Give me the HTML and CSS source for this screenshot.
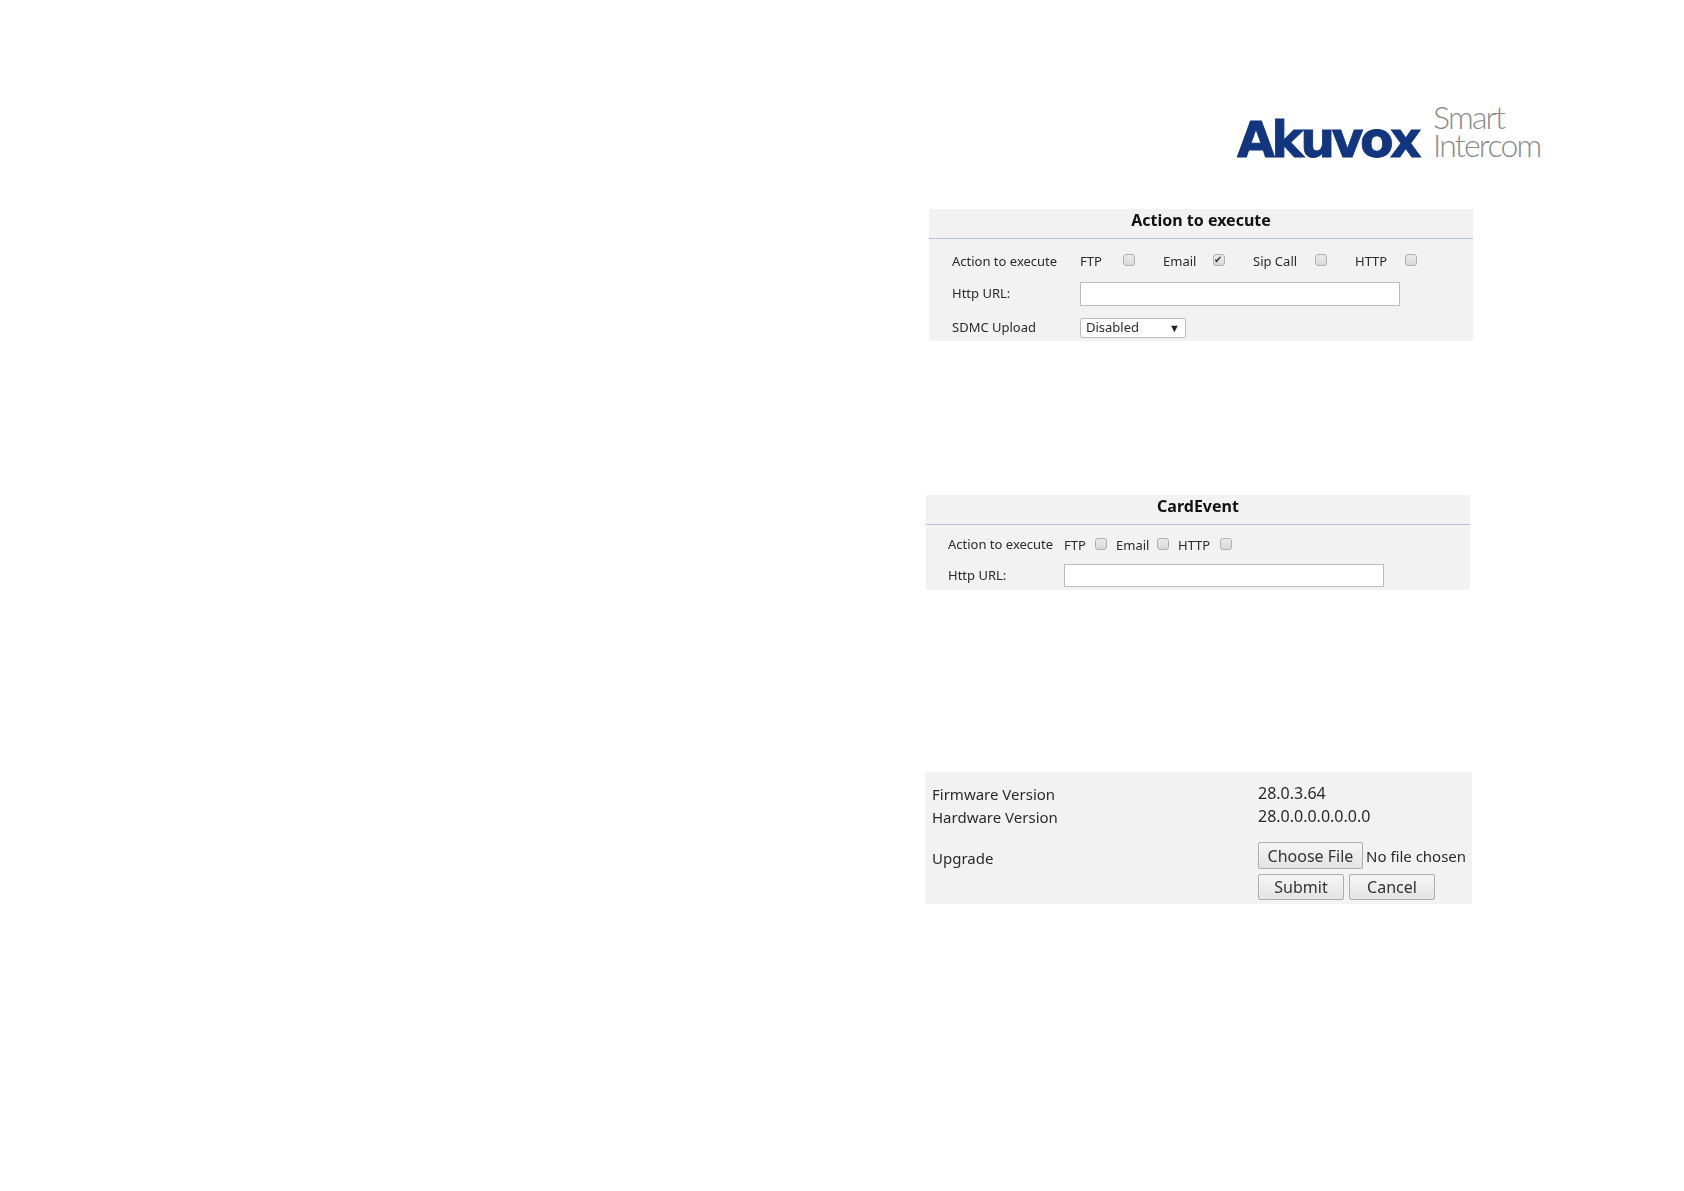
FILE: index.html
```html
<!DOCTYPE html>
<html lang="en">
<head>
<meta charset="utf-8">
<title>Akuvox Smart Intercom</title>
<link rel="stylesheet" href="styles.css">
</head>
<body>
<div class="page">
  <header class="logo">
    <div class="logo-brand">Akuvox</div>
    <div class="logo-tag">Smart<br>Intercom</div>
  </header>

  <section class="panel panel-action">
    <h2 class="panel-title">Action to execute</h2>
    <div class="panel-body">
      <div class="row row-check">
        <span class="label">Action to execute</span>
        <div class="checks">
          <label class="check">FTP<input type="checkbox"></label>
          <label class="check">Email<input type="checkbox" checked></label>
          <label class="check">Sip Call<input type="checkbox"></label>
          <label class="check">HTTP<input type="checkbox"></label>
        </div>
      </div>
      <div class="row">
        <span class="label">Http URL:</span>
        <input class="text-input" type="text">
      </div>
      <div class="row row-select">
        <span class="label">SDMC Upload</span>
        <div class="select"><span>Disabled</span><span class="arrow">▼</span></div>
      </div>
    </div>
  </section>

  <section class="panel panel-card">
    <h2 class="panel-title">CardEvent</h2>
    <div class="panel-body">
      <div class="row row-check">
        <span class="label">Action to execute</span>
        <div class="checks">
          <label class="check">FTP<input type="checkbox"></label>
          <label class="check">Email<input type="checkbox"></label>
          <label class="check">HTTP<input type="checkbox"></label>
        </div>
      </div>
      <div class="row">
        <span class="label">Http URL:</span>
        <input class="text-input" type="text">
      </div>
    </div>
  </section>

  <section class="panel panel-firmware">
    <div class="fw-row"><span class="fw-label">Firmware Version</span><span class="fw-value">28.0.3.64</span></div>
    <div class="fw-row"><span class="fw-label">Hardware Version</span><span class="fw-value">28.0.0.0.0.0.0.0</span></div>
    <div class="fw-upgrade">
      <span class="fw-label fw-upgrade-label">Upgrade</span>
      <div class="fw-actions">
        <div class="fw-line"><button class="btn btn-file" type="button">Choose File</button><span class="no-file">No file chosen</span></div>
        <div class="fw-line fw-buttons"><button class="btn btn-act" type="button">Submit</button><button class="btn btn-act" type="button">Cancel</button></div>
      </div>
    </div>
  </section>
</div>
</body>
</html>
```
FILE: styles.css
```css
* { box-sizing: border-box; }
html, body { margin: 0; padding: 0; background: #fff; }
body { font-family: "Noto Sans", "Open Sans", sans-serif; color: #222; }
.page { width: 1684px; height: 1191px; padding: 107px 0 0 925px; overflow: hidden; }

/* logo */
.logo { display: flex; align-items: flex-end; height: 52px; margin-left: 312px; gap: 12px; }
.logo-brand { width: 184px; font-family: "DejaVu Sans", sans-serif; font-weight: 700; font-size: 49px; line-height: 40px; height: 38px; color: #12357f; -webkit-text-stroke: 0.8px #12357f; letter-spacing: -3.6px; white-space: nowrap; }
.logo-tag { font-family: "Lato", sans-serif; font-weight: 300; font-size: 32px; line-height: 28px; color: #8a8a8a; letter-spacing: -1.8px; white-space: nowrap; }

/* panels */
.panel { width: 544px; background: #f2f2f2; filter: blur(0.35px); }
.panel-action { margin: 50px 0 0 4px; height: 132px; }
.panel-card { margin: 154px 0 0 1px; height: 95px; }
.panel-firmware { margin-top: 182px; width: 547px; height: 132px; padding: 10px 0 0 7px; }
.panel-title { margin: 0; height: 30px; border-bottom: 1px solid #b4c3dd; text-align: center; font-size: 16px; line-height: 22px; font-weight: 700; color: #111; }
.panel-body { display: flex; flex-direction: column; }
.panel-action .panel-body { padding: 11px 0 0 23px; gap: 12px; }
.panel-card .panel-body { padding: 10px 0 0 22px; gap: 9px; }

.row { display: flex; align-items: center; font-size: 13px; color: #2a2a2a; }
.row-check, .row-select { height: 20px; }
.label { margin-bottom: 2px; }
.panel-action .row-check .label { margin-bottom: 0; padding-top: 2px; }
.panel-action .label { width: 128px; }
.panel-card .label { width: 116px; }
.checks { display: grid; }
.panel-action .checks { grid-template-columns: 55px 62px 74px 62px; column-gap: 28px; }
.panel-card .checks { grid-template-columns: 43px 53px 54px; column-gap: 9px; }
.check { display: flex; align-items: center; justify-content: space-between; }
.panel-action .check { padding-top: 1px; }
.check input { appearance: none; margin: 0 0 3px; width: 12px; height: 12px; border: 1px solid #b0b0b0; border-radius: 3px; background: linear-gradient(#eaeaea, #d9d9d9); position: relative; }
.panel-action .check input { margin-bottom: 1px; }
.check input:checked::after { content: "✔"; position: absolute; left: 0; top: -2px; font-size: 10px; line-height: 14px; color: #333; }
.text-input { width: 320px; height: 24px; border: 1px solid #bcbcbc; background: #fff; margin: 0; padding: 0; }
.panel-card .text-input { height: 23px; }
.select { display: flex; align-items: center; justify-content: space-between; width: 106px; height: 20px; padding: 0 5px 2px 5px; background: #fff; border: 1px solid #bcbcbc; border-radius: 2px; }
.arrow { font-size: 11px; color: #222; }

/* firmware */
.fw-row { display: flex; height: 23px; align-items: center; font-size: 15px; color: #2a2a2a; }
.fw-label { width: 326px; }
.fw-value { font-size: 16px; margin-bottom: 2px; }
.fw-upgrade { display: flex; margin-top: 14px; font-size: 15px; color: #2a2a2a; }
.fw-upgrade-label { padding-top: 6px; }
.fw-actions { display: flex; flex-direction: column; gap: 5px; }
.fw-line { display: flex; align-items: center; }
.fw-buttons { gap: 5px; }
.btn { margin: 0; padding: 0; font: inherit; font-size: 16px; color: #333; background: linear-gradient(#f6f6f6, #e3e3e3); border: 1px solid #adadad; border-radius: 2px; }
.btn-file { width: 105px; height: 27px; }
.btn-act { width: 86px; height: 26px; }
.no-file { margin-left: 3px; white-space: nowrap; }
```
